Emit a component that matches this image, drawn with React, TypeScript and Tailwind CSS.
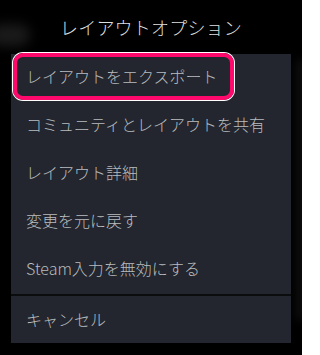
import React from 'react';

const ITEMS = [
  'レイアウトをエクスポート',
  'コミュニティとレイアウトを共有',
  'レイアウト詳細',
  '変更を元に戻す',
  'Steam入力を無効にする',
];

const App: React.FC = () => {
  return (
    <div
      className="relative w-[302px] h-[355px] bg-black overflow-hidden"
      style={{ fontFamily: '"Noto Sans CJK JP", "Noto Sans", sans-serif' }}
    >
      {/* blurred backdrop hints */}
      <div className="absolute left-[-10px] top-[24px] w-[40px] h-[22px] rounded-full bg-[#1a1a1a] blur-[6px]" />
      <div className="absolute right-[-6px] top-[60px] w-[12px] h-[260px] bg-[#0e0e0e] blur-[5px]" />

      <div className="relative h-[54px] flex items-center justify-center">
        <span className="text-[18px] font-light text-[#dcdedf] tracking-[0.2px]">レイアウトオプション</span>
      </div>

      <div className="relative ml-[11px] w-[280px] flex flex-col">
        {ITEMS.map((label, i) => (
          <div
            key={label}
            className="relative h-[48px] bg-[#23262e] flex items-center pl-[15px] text-[16px] font-light text-[#b8bcbf]"
          >
            {i === 0 && (
              <div className="absolute left-[2px] top-[-1px] w-[221px] h-[47px] rounded-[10px] border-4 border-[#ff0a6c] shadow-[0_0_0_1px_#ffffff]" />
            )}
            <span className="relative -mt-[4px]">{label}</span>
          </div>
        ))}
        <div className="h-[2px] bg-[#0b0c0e]" />
        <div className="h-[47px] bg-[#23262e] flex items-center pl-[15px] text-[16px] font-light text-[#b8bcbf]">
          <span className="-mt-[2px]">キャンセル</span>
        </div>
      </div>
    </div>
  );
};

export default App;
